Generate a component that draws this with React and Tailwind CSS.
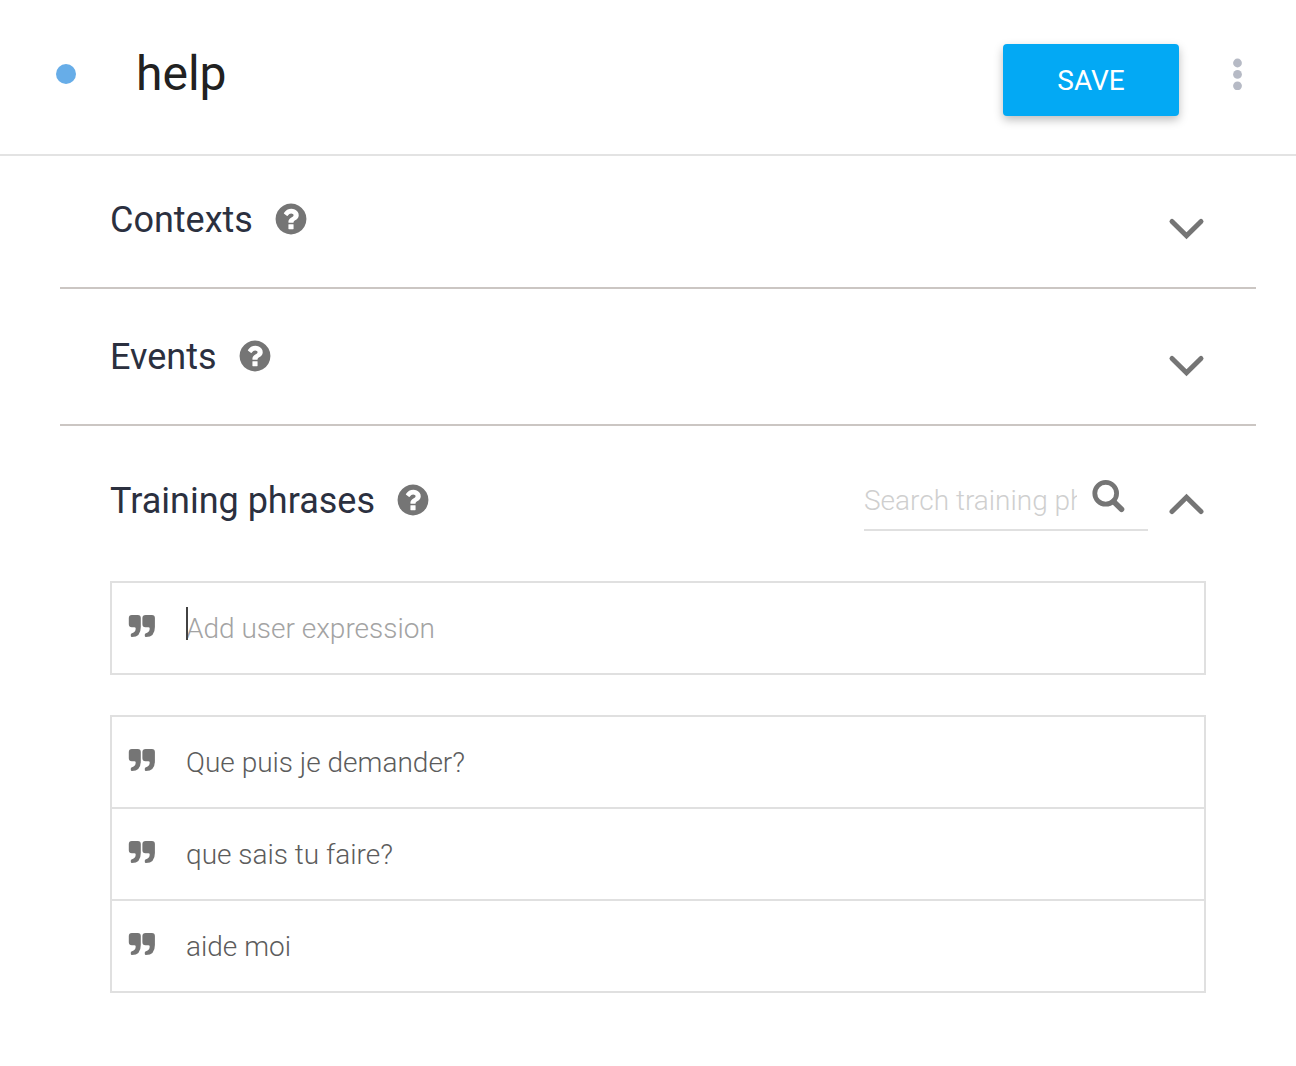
import React from "react";

function HelpIcon() {
  return (
    <svg viewBox="0 0 1792 1792" className="size-9 fill-[#757575]" aria-hidden="true">
      <path d="M1024 1376v-192q0-14-9-23t-23-9h-192q-14 0-23 9t-9 23v192q0 14 9 23t23 9h192q14 0 23-9t9-23zm256-672q0-88-55.5-163t-138.5-116-170-41q-243 0-371 213-15 24 8 42l132 100q7 6 19 6 16 0 25-12 53-68 86-92 34-24 86-24 48 0 85.5 26t37.5 59q0 38-20 61t-68 45q-63 28-115.5 86.5t-52.5 125.5v36q0 14 9 23t23 9h192q14 0 23-9t9-23q0-19 21.5-49.5t54.5-49.5q32-18 49-28.5t46-35 44.5-48 28-60.5 12.5-81zm384 192q0 209-103 385.5t-279.5 279.5-385.5 103-385.5-103-279.5-279.5-103-385.5 103-385.5 279.5-279.5 385.5-103 385.5 103 279.5 279.5 103 385.5z" />
    </svg>
  );
}

function QuoteIcon() {
  return (
    <svg viewBox="0 0 28 26" className="h-[26px] w-7 shrink-0 fill-[#757575]" aria-hidden="true">
      <path d="M3.800 0H9.800Q12.800 0 12.800 3V12Q12.800 22 4 22Q2.800 22 2.800 21V19.500Q2.800 18.400 4 18.200Q7.700 17.400 7.700 13.500Q7.700 12.300 6.400 12.300H3.800Q0.800 12.300 0.800 9.300V3Q0.800 0 3.800 0Z" />
      <path d="M17.700 0H23.900Q26.900 0 26.900 3V12Q26.900 22 18 22Q16.800 22 16.800 21V19.500Q16.800 18.400 18 18.200Q21.700 17.400 21.700 13.500Q21.700 12.300 20.400 12.300H17.400Q14.400 12.300 14.400 9.300V3Q14.400 0 17.700 0Z" />
    </svg>
  );
}

function Chevron({ up = false }) {
  return (
    <svg viewBox="0 0 34 20" className="h-5 w-[34px] overflow-visible fill-none stroke-[#757575]" strokeWidth="5" strokeLinecap="round" aria-hidden="true">
      <path d={up ? "M2 17.500L16.500 3.300L31 17.500" : "M2 2.500L16.500 16.700L31 2.500"} />
    </svg>
  );
}

function Title({ children }) {
  return (
    <div className="flex items-start gap-5">
      <h2 className="text-[36px] leading-[46px] text-[#2b303f]">{children}</h2>
      <button type="button" aria-label={`About ${children}`} className="mt-1">
        <HelpIcon />
      </button>
    </div>
  );
}

function CollapsedSection({ title }) {
  return (
    <section className="flex h-[137px] items-start justify-between border-b-2 border-[#cbc6c3] px-[50px] pt-[45px]">
      <Title>{title}</Title>
      <button type="button" aria-label={`Expand ${title}`} className="mt-[22px] mr-0.5">
        <Chevron />
      </button>
    </section>
  );
}

const phrases = ["Que puis je demander?", "que sais tu faire?", "aide moi"];

export default function App() {
  return (
    <main className="min-h-screen bg-white pb-[73px] font-[Roboto,sans-serif]">
      <header className="flex h-[156px] items-start border-b-2 border-[#e3e3e3] pr-[53px] pl-14">
        <span className="mt-16 size-5 shrink-0 rounded-full bg-[#67ade8]" />
        <h1 className="mt-[38px] ml-[60px] flex-1 text-[48px] leading-[72px] text-[#212121]">help</h1>
        <button type="button" className="mt-11 h-[72px] w-44 rounded bg-[#03a9f4] pt-0.5 text-[28px] text-white shadow-[0_4px_10px_rgba(0,0,0,0.26)]">
          SAVE
        </button>
        <button type="button" aria-label="More options" className="mt-[58px] ml-[52px]">
          <svg viewBox="0 0 12 32" className="h-8 w-3 fill-[#b6bac5]" aria-hidden="true">
            <circle cx="6.500" cy="5" r="4.400" />
            <circle cx="6.500" cy="16.400" r="4.400" />
            <circle cx="6.500" cy="27.800" r="4.400" />
          </svg>
        </button>
      </header>

      <div className="mr-10 ml-[60px]">
        <div className="-mt-1">
          <CollapsedSection title="Contexts" />
          <CollapsedSection title="Events" />
        </div>

        <section className="px-[50px] pt-[44px]">
          <div className="flex items-start justify-between">
            <div className="pt-2">
              <Title>Training phrases</Title>
            </div>
            <div className="flex items-start">
              <div className="mr-[22px] flex h-[61px] w-[284px] items-start border-b-2 border-[#e0e0e0]">
                <input
                  type="text"
                  aria-label="Search training phrases"
                  placeholder="Search training phrases"
                  className="mt-2.5 h-10 w-[213px] bg-transparent pt-0.5 text-[28px] font-light text-[#616161] outline-none placeholder:text-[#cfcfcf]"
                />
                <button type="button" aria-label="Search" className="mt-2.5 ml-[15px]">
                  <svg viewBox="0 0 33 33" className="size-[33px] fill-none stroke-[#757575]" aria-hidden="true">
                    <circle cx="13.700" cy="13.300" r="10.900" strokeWidth="4.800" />
                    <path d="M21.500 21.500L29.500 29.200" strokeWidth="5.600" strokeLinecap="round" />
                  </svg>
                </button>
              </div>
              <button type="button" aria-label="Collapse Training phrases" className="mt-6 mr-0.5">
                <Chevron up />
              </button>
            </div>
          </div>

          <div className="mt-[50px] flex h-[94px] items-center border-2 border-[#e0e0e0] pl-4">
            <QuoteIcon />
            <div className="relative ml-[30px] flex-1">
              <input
                type="text"
                aria-label="Add user expression"
                placeholder="Add user expression"
                className="block h-[42px] w-full bg-transparent pt-0.5 text-[28px] font-light text-[#616161] outline-none placeholder:text-[#a3a3a3]"
              />
              <span className="absolute top-0 left-0 h-[33px] w-0.5 bg-[#424242]" />
            </div>
          </div>

          <ul className="mt-10 divide-y-2 divide-[#e0e0e0] border-2 border-[#e0e0e0]">
            {phrases.map((phrase) => (
              <li key={phrase} className="flex h-[92px] items-center pl-4 last:h-[90px]">
                <QuoteIcon />
                <span className="ml-[30px] pt-0.5 text-[28px] leading-10 font-light text-[#5c5c5c]">{phrase}</span>
              </li>
            ))}
          </ul>
        </section>
      </div>
    </main>
  );
}
